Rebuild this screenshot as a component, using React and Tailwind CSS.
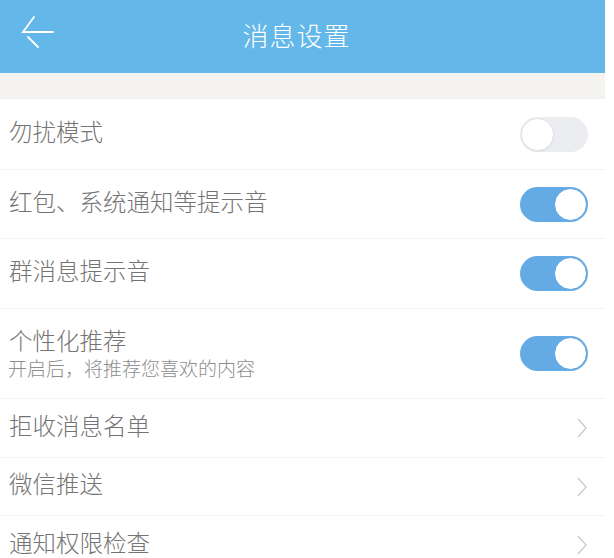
import { useState } from "react";

const font = { fontFamily: '"Noto Sans CJK SC", "Noto Sans", sans-serif' };

const Toggle = ({ on, onClick }) => (
  <div
    onClick={onClick}
    className={`relative w-[68px] h-[35px] rounded-full cursor-pointer ${
      on ? "bg-[#64aae4]" : "bg-[#ecedf1]"
    }`}
  >
    <div
      className={`absolute top-[1px] w-[33px] h-[33px] rounded-full bg-white ${
        on
          ? "right-[1px] border border-[#5aa3e0]"
          : "left-[1px] border border-[#e4e5ea] shadow-[0_1px_2px_rgba(0,0,0,0.06)]"
      }`}
    />
  </div>
);

const Chevron = () => (
  <svg width="12" height="20" viewBox="0 0 12 20" fill="none">
    <path d="M2 1 L10 10 L2 19" stroke="#cbcbcb" strokeWidth="1.4" />
  </svg>
);

const Row = ({ title, sub, right, h }) => (
  <div
    className={`flex items-center justify-between pl-[9px] pr-[17px] border-b border-[#f3f3f3] ${h}`}
  >
    <div className={`flex flex-col ${sub ? "" : "mb-[6px]"}`}>
      <span className="text-[23.5px] leading-[29px] font-light text-[#747474]">{title}</span>
      {sub && (
        <span className="text-[19px] leading-[26px] font-light text-[#8e8e8e] -ml-[1px]">
          {sub}
        </span>
      )}
    </div>
    {right}
  </div>
);

const App = () => {
  const [toggles, setToggles] = useState([false, true, true, true]);
  const flip = (i) => setToggles(toggles.map((t, j) => (j === i ? !t : t)));

  return (
    <div className="w-[614px] h-[558px] bg-white overflow-hidden" style={font}>
      <div className="w-[605px]">
        <div className="relative h-[73px] bg-[#64b7e9] flex items-center justify-center">
          <svg
            className="absolute left-[20px] top-[14px]"
            width="36"
            height="36"
            viewBox="0 0 36 36"
            fill="none"
            stroke="white"
            strokeWidth="1.8"
            strokeLinecap="round"
          >
            <path d="M14 3 L3 18 L33 18" />
            <path d="M8 23 L18 33" />
          </svg>
          <span className="text-[26px] font-light text-white tracking-[1px] pr-[12px] mb-[4px]">
            消息设置
          </span>
        </div>
        <div className="h-[26px] bg-[#f4f3f0]" />
        <Row h="h-[71px]" title="勿扰模式" right={<Toggle on={toggles[0]} onClick={() => flip(0)} />} />
        <Row h="h-[69px]" title="红包、系统通知等提示音" right={<Toggle on={toggles[1]} onClick={() => flip(1)} />} />
        <Row h="h-[70px]" title="群消息提示音" right={<Toggle on={toggles[2]} onClick={() => flip(2)} />} />
        <Row
          h="h-[90px]"
          title="个性化推荐"
          sub="开启后，将推荐您喜欢的内容"
          right={<Toggle on={toggles[3]} onClick={() => flip(3)} />}
        />
        <Row h="h-[59px]" title="拒收消息名单" right={<Chevron />} />
        <Row h="h-[58px]" title="微信推送" right={<Chevron />} />
        <Row h="h-[59px]" title="通知权限检查" right={<Chevron />} />
      </div>
    </div>
  );
};

export default App;
